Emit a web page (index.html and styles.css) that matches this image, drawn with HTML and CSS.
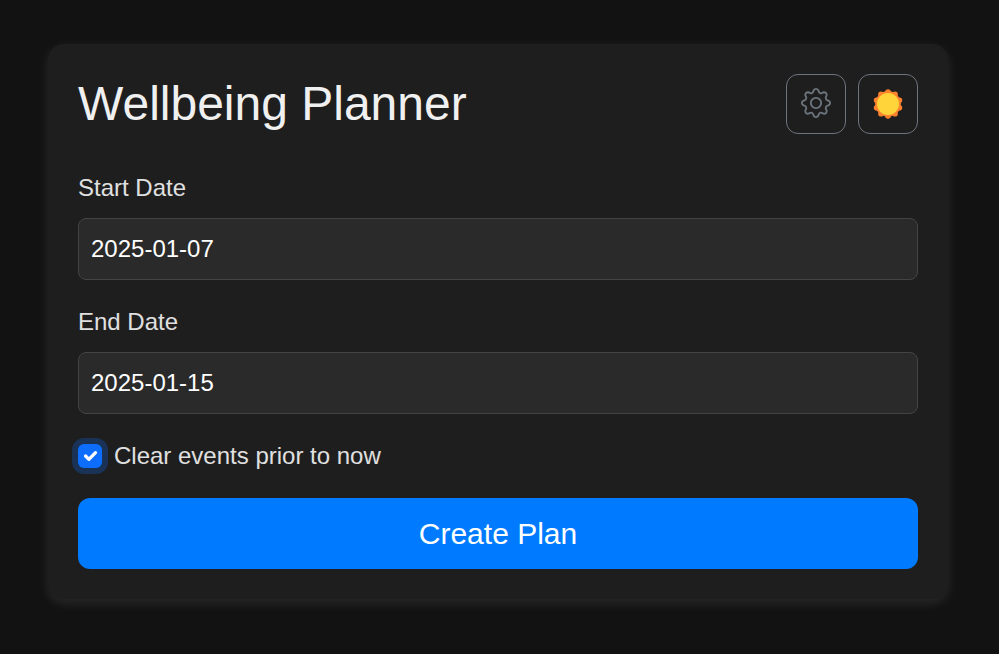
FILE: index.html
```html
<!DOCTYPE html>
<html lang="en">
<head>
<meta charset="utf-8">
<title>Wellbeing Planner</title>
<link rel="stylesheet" href="styles.css">
</head>
<body>
<main class="card">
  <header class="head">
    <h1>Wellbeing Planner</h1>
    <div class="tools">
      <button class="tool settings" aria-label="Settings"><svg width="30" height="30" viewBox="0 0 16 16" fill="#6c757d"><path d="M8 4.754a3.246 3.246 0 1 0 0 6.492 3.246 3.246 0 0 0 0-6.492M5.754 8a2.246 2.246 0 1 1 4.492 0 2.246 2.246 0 0 1-4.492 0"/><path d="M9.796 1.343c-.527-1.79-3.065-1.79-3.592 0l-.094.319a.873.873 0 0 1-1.255.52l-.292-.16c-1.64-.892-3.433.902-2.54 2.541l.159.292a.873.873 0 0 1-.52 1.255l-.319.094c-1.79.527-1.79 3.065 0 3.592l.319.094a.873.873 0 0 1 .52 1.255l-.16.292c-.892 1.64.901 3.434 2.541 2.54l.292-.159a.873.873 0 0 1 1.255.52l.094.319c.527 1.79 3.065 1.79 3.592 0l.094-.319a.873.873 0 0 1 1.255-.52l.292.16c1.64.893 3.434-.902 2.54-2.541l-.159-.292a.873.873 0 0 1 .52-1.255l.319-.094c1.79-.527 1.79-3.065 0-3.592l-.319-.094a.873.873 0 0 1-.52-1.255l.16-.292c.893-1.64-.902-3.433-2.541-2.54l-.292.159a.873.873 0 0 1-1.255-.52zm-2.633.283c.246-.835 1.428-.835 1.674 0l.094.319a1.873 1.873 0 0 0 2.693 1.115l.291-.16c.764-.415 1.6.42 1.184 1.185l-.159.292a1.873 1.873 0 0 0 1.116 2.692l.318.094c.835.246.835 1.428 0 1.674l-.319.094a1.873 1.873 0 0 0-1.115 2.693l.16.291c.415.764-.42 1.6-1.185 1.184l-.291-.159a1.873 1.873 0 0 0-2.693 1.116l-.094.318c-.246.835-1.428.835-1.674 0l-.094-.319a1.873 1.873 0 0 0-2.692-1.115l-.292.16c-.764.415-1.6-.42-1.184-1.185l.159-.291A1.873 1.873 0 0 0 1.945 8.93l-.319-.094c-.835-.246-.835-1.428 0-1.674l.319-.094A1.873 1.873 0 0 0 3.06 4.377l-.16-.292c-.415-.764.42-1.6 1.185-1.184l.292.159a1.873 1.873 0 0 0 2.692-1.115z"/></svg></button>
      <button class="tool" aria-label="Light theme"><svg width="30" height="30" viewBox="0 0 30 30"><circle cx="15" cy="15" r="12.9" fill="#ff822d"/><path fill="none" stroke="#ff822d" stroke-width="5.6" stroke-linecap="round" d="M15 3h.01M22.05 5.29h.01M26.41 11.29h.01M26.41 18.71h.01M22.05 24.71h.01M15 27h.01M7.95 24.71h.01M3.59 18.71h.01M3.59 11.29h.01M7.95 5.29h.01"/><circle cx="15" cy="15" r="11" fill="#ffd43b"/></svg></button>
    </div>
  </header>
  <form class="form">
    <label for="start">Start Date</label>
    <input id="start" class="date" type="text" value="2025-01-07">
    <label for="end">End Date</label>
    <input id="end" class="date" type="text" value="2025-01-15">
    <label class="check"><span class="box"><svg width="22" height="22" viewBox="0 0 20 20"><path fill="none" stroke="#fff" stroke-linecap="round" stroke-linejoin="round" stroke-width="3" d="m6 10 3 3 6-6"/></svg></span>Clear events prior to now</label>
    <button class="submit" type="button">Create Plan</button>
  </form>
</main>
</body>
</html>
```
FILE: styles.css
```css
* { box-sizing: border-box; }
body {
  margin: 0;
  padding: 44px 51px 0 48px;
  min-height: 654px;
  background: #121212;
  color: #e0e0e0;
  font: 24px/36px "Liberation Sans", Arial, sans-serif;
}
.card {
  height: 555px;
  padding: 30px;
  border-radius: 16px;
  background: #1e1e1e;
  box-shadow: 0 4px 12px rgba(255, 255, 255, .1);
}
.head { display: flex; justify-content: space-between; height: 60px; }
h1 { margin: 0; color: #f0f0f0; font-size: 48px; font-weight: 400; line-height: 60px; }
.tools { display: flex; gap: 12px; }
.tool {
  display: flex;
  align-items: center;
  justify-content: center;
  width: 60px;
  height: 60px;
  padding: 0;
  border: 1px solid #6c757d;
  border-radius: 12px;
  background: transparent;
}
.settings { padding-bottom: 2px; }
.form { display: flex; flex-direction: column; padding-top: 36px; }
.date {
  height: 62px;
  margin: 12px 0 24px;
  padding: 0 12px;
  border: 1px solid #444;
  border-radius: 8px;
  background: #2a2a2a;
  color: #fff;
  font: inherit;
}
.check { display: flex; align-items: center; gap: 12px; }
.box {
  display: flex;
  align-items: center;
  justify-content: center;
  width: 24px;
  height: 24px;
  border-radius: 6px;
  background: #0d6efd;
  box-shadow: 0 0 0 6px rgba(13, 110, 253, .25);
}
.submit {
  height: 71px;
  margin-top: 24px;
  padding: 0;
  border: 0;
  border-radius: 12px;
  background: #007bff;
  color: #fff;
  font: 30px/45px "Liberation Sans", Arial, sans-serif;
}
```
